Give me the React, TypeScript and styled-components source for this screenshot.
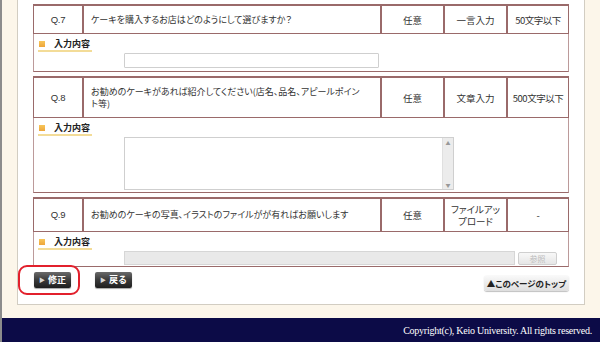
import styled, { createGlobalStyle, css } from "styled-components";

const lineDark = "#9a6a6a";
const lineLight = "#bc9a9a";
const textColor = "#333";

const GlobalStyle = createGlobalStyle`
  html, body {
    margin: 0;
    padding: 0;
    background: #fcf6ea;
  }
  body {
    font-family: "Noto Sans CJK JP", "Noto Sans", sans-serif;
    color: ${textColor};
  }
`;

const Page = styled.div`
  width: 600px;
  height: 342px;
  display: flex;
  flex-direction: column;
  overflow: hidden;
  border-left: 2px solid #8c8c8c;
  box-sizing: border-box;
`;

const Main = styled.div`
  flex: 0 0 305px;
  display: flex;
  padding-left: 15px;
`;

const Panel = styled.div`
  width: 568px;
  box-sizing: border-box;
  background: #fff;
  border: 1px solid #d2cdc2;
  border-top: none;
  padding: 4px 15px 0 15px;
  display: flex;
  flex-direction: column;
  gap: 4px;
`;

const Block = styled.div`
  display: flex;
  flex-direction: column;
`;

const HeaderRow = styled.div<{ $h: number }>`
  display: grid;
  grid-template-columns: 48px 298px 63px 63px 1fr;
  height: ${(p) => p.$h}px;
  box-sizing: border-box;
  border: 1px solid ${lineDark};
  border-top-width: 2px;
  font-size: 9.5px;
  font-feature-settings: "palt";
  line-height: 12px;
`;

const Cell = styled.div<{ $align?: "left" | "center"; $first?: boolean }>`
  display: flex;
  align-items: center;
  justify-content: ${(p) => (p.$align === "left" ? "flex-start" : "center")};
  text-align: ${(p) => p.$align ?? "center"};
  padding: 0 3px;
  ${(p) =>
    p.$align === "left" &&
    css`
      font-size: 9px;
      padding: 0 14px 0 7px;
    `}
  ${(p) =>
    !p.$first &&
    css`
      border-left: 2px solid ${lineDark};
    `}
`;

const Qno = styled.span`
  font-family: "Liberation Sans", Arial, sans-serif;
  font-size: 9.5px;
  letter-spacing: -0.3px;
`;

const Limit = styled.span`
  letter-spacing: -0.5px;
`;

const Body = styled.div<{ $h: number }>`
  height: ${(p) => p.$h}px;
  box-sizing: border-box;
  border: 1px solid ${lineLight};
  border-top: none;
  border-bottom-color: ${lineDark};
  padding: 4px 0 0 4px;
  display: flex;
  flex-direction: column;
  align-items: flex-start;
`;

const Label = styled.div`
  display: flex;
  align-items: center;
  gap: 9px;
  width: 53px;
  height: 11px;
  padding: 0 0 1px 1px;
  border-bottom: 2px solid #f3dc98;
  font-size: 9px;
  font-weight: bold;
  line-height: 11px;
  color: #222;
`;

const Square = styled.span`
  width: 6px;
  height: 6px;
  background: linear-gradient(#f7c65a, #eea53a);
`;

const FieldRow = styled.div`
  display: flex;
  align-items: flex-start;
  gap: 3px;
  padding-left: 86px;
  margin-top: 1px;
`;

const TextInput = styled.div`
  width: 255px;
  height: 15px;
  box-sizing: border-box;
  border: 1px solid #cfcfcf;
  border-radius: 1px;
  background: #fff;
`;

const TextArea = styled.div`
  width: 330px;
  height: 53px;
  box-sizing: border-box;
  border: 1px solid #cfcfcf;
  background: #fff;
  display: flex;
  justify-content: flex-end;
`;

const ScrollTrack = styled.div`
  width: 10px;
  background: #ececec;
  border-left: 1px solid #e0e0e0;
  display: flex;
  flex-direction: column;
  justify-content: space-between;
  align-items: center;
  font-size: 5px;
  line-height: 9px;
  color: #999;
`;

const FileBar = styled.div`
  width: 391px;
  height: 14px;
  box-sizing: border-box;
  border: 1px solid #d6d6d6;
  background: #e9e9e9;
`;

const BrowseButton = styled.div`
  width: 39px;
  height: 13px;
  margin-top: 1px;
  box-sizing: border-box;
  border: 1px solid #cfcfcf;
  border-radius: 2px;
  background: linear-gradient(#f8f8f8, #e6e6e6);
  font-size: 8px;
  line-height: 11px;
  color: #bdbdbd;
  text-align: center;
`;

const Actions = styled.div`
  display: flex;
  align-items: flex-start;
  margin-top: 1px;
  padding-left: 1px;
`;

const Focus = styled.div`
  position: relative;
`;

const Ring = styled.div`
  position: absolute;
  left: -16px;
  top: -7px;
  width: 62px;
  height: 30px;
  box-sizing: border-box;
  border: 2.5px solid #e2202c;
  border-radius: 9px;
`;

const DarkButton = styled.div`
  display: flex;
  align-items: center;
  gap: 3px;
  width: 37px;
  height: 16px;
  box-sizing: border-box;
  padding-left: 5px;
  border-radius: 2px;
  background: linear-gradient(#6a6a6a, #3a3a3a 50%, #1e1e1e);
  box-shadow: 0 1px 1px rgba(0, 0, 0, 0.35);
  color: #fff;
  font-size: 9px;
  font-weight: bold;
  line-height: 16px;
`;

const Arrow = styled.span`
  font-size: 6px;
  color: #d8d8d8;
`;

const Back = styled(DarkButton)`
  margin-left: 24px;
`;

const TopButton = styled.div`
  margin-left: auto;
  margin-top: 3px;
  width: 85px;
  height: 16px;
  box-sizing: border-box;
  border-radius: 3px;
  background: linear-gradient(#fafafa, #dedede);
  box-shadow: 0 1px 1px rgba(0, 0, 0, 0.25);
  font-size: 8.5px;
  font-weight: bold;
  line-height: 16px;
  text-align: center;
  color: #222;
  font-feature-settings: "palt";
`;

const Footer = styled.div`
  margin-top: 13px;
  flex: 1;
  background: #0c0b47;
  display: flex;
  align-items: center;
  justify-content: flex-end;
  padding-right: 8px;
  font-family: "Liberation Serif", "Times New Roman", serif;
  font-size: 10px;
  color: #fff;
  letter-spacing: -0.25px;
`;

interface Question {
  no: string;
  text: string;
  required: string;
  kind: string;
  limit: string;
  headH: number;
  bodyH: number;
  field: "text" | "area" | "file";
}

const questions: Question[] = [
  {
    no: "Q.7",
    text: "ケーキを購入するお店はどのようにして選びますか？",
    required: "任意",
    kind: "一言入力",
    limit: "50文字以下",
    headH: 30,
    bodyH: 38,
    field: "text",
  },
  {
    no: "Q.8",
    text: "お勧めのケーキがあれば紹介してください(店名、品名、アピールポイント等)",
    required: "任意",
    kind: "文章入力",
    limit: "500文字以下",
    headH: 42,
    bodyH: 75,
    field: "area",
  },
  {
    no: "Q.9",
    text: "お勧めのケーキの写真、イラストのファイルがが有ればお願いします",
    required: "任意",
    kind: "ファイルアップロード",
    limit: "-",
    headH: 35,
    bodyH: 35,
    field: "file",
  },
];

const Field = ({ type }: { type: Question["field"] }) => {
  if (type === "text") return <TextInput />;
  if (type === "area")
    return (
      <TextArea>
        <ScrollTrack>
          <span>▲</span>
          <span>▼</span>
        </ScrollTrack>
      </TextArea>
    );
  return (
    <>
      <FileBar />
      <BrowseButton>参照</BrowseButton>
    </>
  );
};

const App = () => (
  <>
    <GlobalStyle />
    <Page>
      <Main>
        <Panel>
          {questions.map((q) => (
            <Block key={q.no}>
              <HeaderRow $h={q.headH}>
                <Cell $first>
                  <Qno>{q.no}</Qno>
                </Cell>
                <Cell $align="left">{q.text}</Cell>
                <Cell>{q.required}</Cell>
                <Cell>{q.kind}</Cell>
                <Cell>
                  <Limit>{q.limit}</Limit>
                </Cell>
              </HeaderRow>
              <Body $h={q.bodyH}>
                <Label>
                  <Square />
                  入力内容
                </Label>
                <FieldRow>
                  <Field type={q.field} />
                </FieldRow>
              </Body>
            </Block>
          ))}
          <Actions>
            <Focus>
              <Ring />
              <DarkButton>
                <Arrow>▶</Arrow>修正
              </DarkButton>
            </Focus>
            <Back>
              <Arrow>▶</Arrow>戻る
            </Back>
            <TopButton>▲このページのトップ</TopButton>
          </Actions>
        </Panel>
      </Main>
      <Footer>Copyright(c), Keio University. All rights reserved.</Footer>
    </Page>
  </>
);

export default App;
